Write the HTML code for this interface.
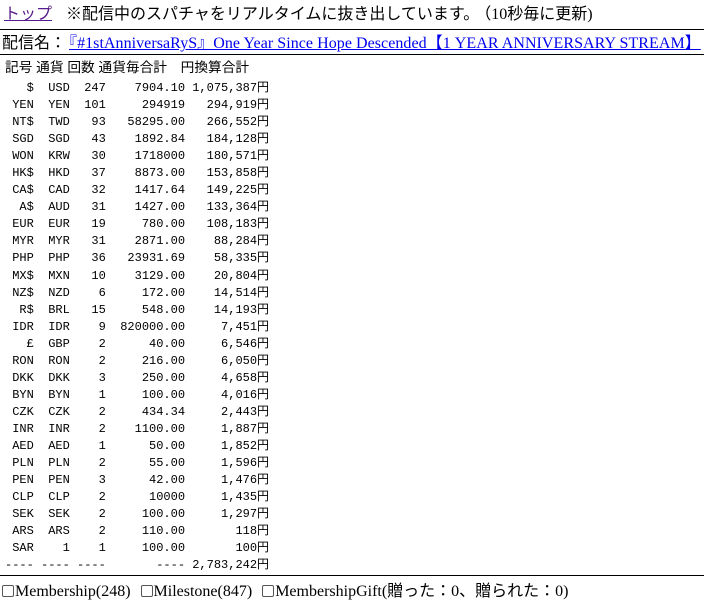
<!DOCTYPE html>
<html><head><meta charset="utf-8"><style>
body{margin:0;width:704px;height:606px;overflow:hidden;background:#fff;font-family:"Liberation Serif","Noto Sans CJK JP",serif;font-size:16px;color:#000}
.l1{position:absolute;left:4px;top:5px;white-space:nowrap;line-height:20px}
.l1 a{color:#551a8b;margin-right:14px}
.hr{position:absolute;left:0;width:704px;height:1px;background:#000}
.l2{position:absolute;left:2px;top:34px;white-space:nowrap;line-height:20px;width:702px;overflow:hidden}
.l2 a{color:#00e;margin-left:3px;letter-spacing:0.05px}
.hd{position:absolute;left:5px;top:60px;font-family:"Liberation Sans","Noto Sans CJK JP",sans-serif;font-size:13.7px;line-height:16px;white-space:pre}
pre{position:absolute;left:5px;top:80px;margin:0;font-family:"Liberation Mono","Noto Sans CJK JP",monospace;font-size:12px;line-height:17.04px}
.ft{position:absolute;left:2px;top:582px;white-space:nowrap;line-height:20px}
.cb{display:inline-block;width:10px;height:10px;border:1px solid #555;border-radius:2px;vertical-align:-1px;margin-right:1px}
.ft .g{margin-left:10px}
</style></head><body>
<div class="l1"><a href="#">トップ</a>※配信中のスパチャをリアルタイムに抜き出しています。<span style="margin-left:4px">（10秒毎に更新)</span></div>
<div class="hr" style="top:29px"></div>
<div class="l2">配信名：<a href="#">『#1stAnniversaRyS』One Year Since Hope Descended【1 YEAR ANNIVERSARY STREAM】</a></div>
<div class="hr" style="top:54px"></div>
<div class="hd">記号 通貨 回数 通貨毎合計　円換算合計</div>
<pre>   $  USD  247    7904.10 1,075,387円
 YEN  YEN  101     294919   294,919円
 NT$  TWD   93   58295.00   266,552円
 SGD  SGD   43    1892.84   184,128円
 WON  KRW   30    1718000   180,571円
 HK$  HKD   37    8873.00   153,858円
 CA$  CAD   32    1417.64   149,225円
  A$  AUD   31    1427.00   133,364円
 EUR  EUR   19     780.00   108,183円
 MYR  MYR   31    2871.00    88,284円
 PHP  PHP   36   23931.69    58,335円
 MX$  MXN   10    3129.00    20,804円
 NZ$  NZD    6     172.00    14,514円
  R$  BRL   15     548.00    14,193円
 IDR  IDR    9  820000.00     7,451円
   £  GBP    2      40.00     6,546円
 RON  RON    2     216.00     6,050円
 DKK  DKK    3     250.00     4,658円
 BYN  BYN    1     100.00     4,016円
 CZK  CZK    2     434.34     2,443円
 INR  INR    2    1100.00     1,887円
 AED  AED    1      50.00     1,852円
 PLN  PLN    2      55.00     1,596円
 PEN  PEN    3      42.00     1,476円
 CLP  CLP    2      10000     1,435円
 SEK  SEK    2     100.00     1,297円
 ARS  ARS    2     110.00       118円
 SAR    1    1     100.00       100円
---- ---- ----       ---- 2,783,242円</pre>
<div class="hr" style="top:575px"></div>
<div class="ft"><span class="cb"></span>Membership(248)<span class="cb g"></span>Milestone(847)<span class="cb g"></span>MembershipGift(贈った：0、贈られた：0)</div>
</body></html>
